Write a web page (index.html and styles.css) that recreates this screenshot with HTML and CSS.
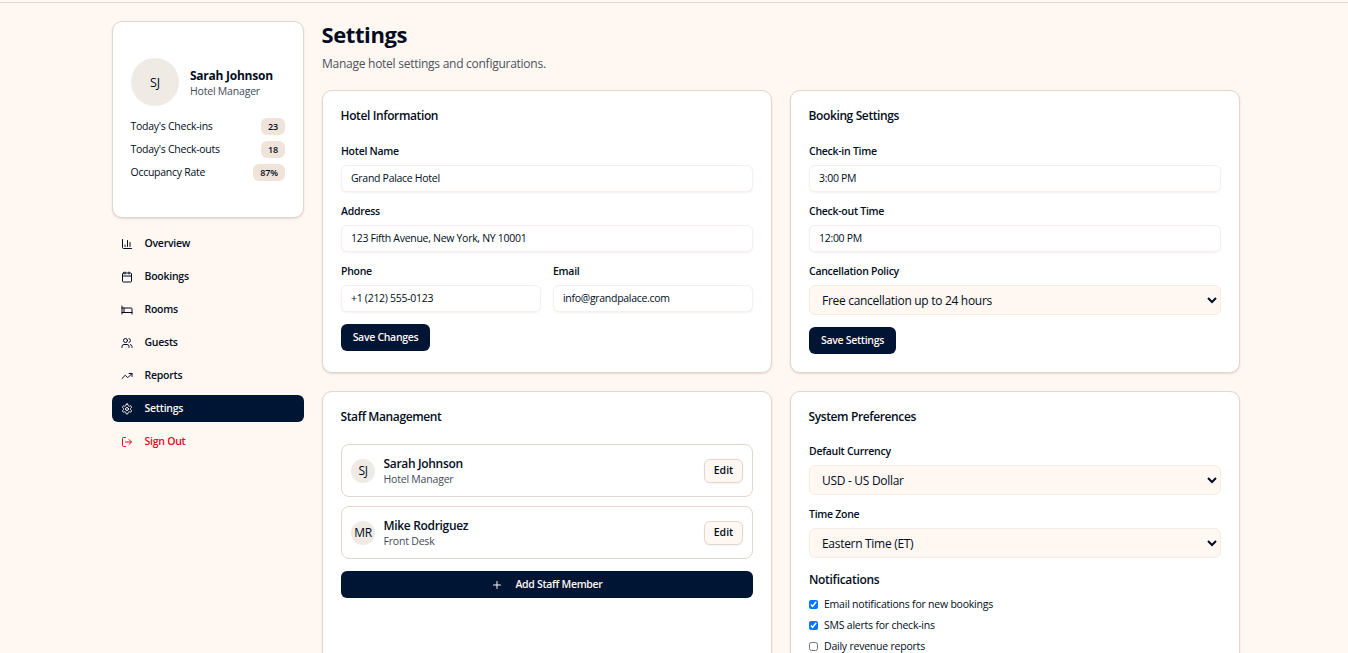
FILE: index.html
```html
<!DOCTYPE html>
<html lang="en">
<head>
<meta charset="utf-8">
<title>Settings</title>
<link rel="stylesheet" href="styles.css">
</head>
<body>
<header class="topbar"></header>
<div class="shell">
  <aside class="sidebar">
    <section class="card profile">
      <div class="profile-head">
        <div class="avatar avatar-lg">SJ</div>
        <div class="profile-text">
          <div class="profile-name">Sarah Johnson</div>
          <div class="role">Hotel Manager</div>
        </div>
      </div>
      <div class="stats">
        <div class="stat"><span>Today's Check-ins</span><b class="badge">23</b></div>
        <div class="stat"><span>Today's Check-outs</span><b class="badge">18</b></div>
        <div class="stat"><span>Occupancy Rate</span><b class="badge">87%</b></div>
      </div>
    </section>
    <nav class="nav">
      <a class="nav-item"><svg class="icon" viewBox="0 0 24 24"><path d="M3 3v16a2 2 0 0 0 2 2h16M18 17V9M13 17V5M8 17v-3"/></svg><span>Overview</span></a>
      <a class="nav-item"><svg class="icon" viewBox="0 0 24 24"><path d="M8 2v4M16 2v4M3 10h18"/><rect width="18" height="18" x="3" y="4" rx="2"/></svg><span>Bookings</span></a>
      <a class="nav-item"><svg class="icon" viewBox="0 0 24 24"><path d="M2 4v16M2 8h18a2 2 0 0 1 2 2v10M2 17h20M6 8v9"/></svg><span>Rooms</span></a>
      <a class="nav-item"><svg class="icon" viewBox="0 0 24 24"><path d="M16 21v-2a4 4 0 0 0-4-4H6a4 4 0 0 0-4 4v2M22 21v-2a4 4 0 0 0-3-3.87M16 3.13a4 4 0 0 1 0 7.75"/><circle cx="9" cy="7" r="4"/></svg><span>Guests</span></a>
      <a class="nav-item"><svg class="icon" viewBox="0 0 24 24"><path d="m22 7-8.500 8.500-5-5L2 17M16 7h6v6"/></svg><span>Reports</span></a>
      <a class="nav-item active"><svg class="icon" viewBox="0 0 24 24"><path d="M12.220 2h-.44a2 2 0 0 0-2 2v.18a2 2 0 0 1-1 1.730l-.43.25a2 2 0 0 1-2 0l-.15-.08a2 2 0 0 0-2.730.73l-.22.38a2 2 0 0 0 .73 2.730l.15.1a2 2 0 0 1 1 1.720v.51a2 2 0 0 1-1 1.740l-.15.09a2 2 0 0 0-.73 2.730l.22.38a2 2 0 0 0 2.730.73l.15-.08a2 2 0 0 1 2 0l.43.25a2 2 0 0 1 1 1.730V20a2 2 0 0 0 2 2h.44a2 2 0 0 0 2-2v-.18a2 2 0 0 1 1-1.730l.43-.25a2 2 0 0 1 2 0l.15.08a2 2 0 0 0 2.730-.73l.22-.39a2 2 0 0 0-.73-2.730l-.15-.08a2 2 0 0 1-1-1.740v-.5a2 2 0 0 1 1-1.740l.15-.09a2 2 0 0 0 .73-2.730l-.22-.38a2 2 0 0 0-2.730-.73l-.15.08a2 2 0 0 1-2 0l-.43-.25a2 2 0 0 1-1-1.730V4a2 2 0 0 0-2-2z"/><circle cx="12" cy="12" r="3"/></svg><span>Settings</span></a>
      <a class="nav-item danger"><svg class="icon" viewBox="0 0 24 24"><path d="M9 21H5a2 2 0 0 1-2-2V5a2 2 0 0 1 2-2h4M16 17l5-5-5-5M21 12H9"/></svg><span>Sign Out</span></a>
    </nav>
  </aside>
  <main class="main">
    <h1 class="page-title">Settings</h1>
    <p class="page-sub">Manage hotel settings and configurations.</p>
    <div class="cards">
      <section class="card panel">
        <h2 class="panel-title">Hotel Information</h2>
        <div class="fields fields-top">
          <div><label class="label">Hotel Name</label><input class="input" value="Grand Palace Hotel"></div>
          <div><label class="label">Address</label><input class="input" value="123 Fifth Avenue, New York, NY 10001"></div>
          <div class="pair">
            <div><label class="label">Phone</label><input class="input" value="+1 (212) 555-0123"></div>
            <div><label class="label">Email</label><input class="input" value="info@grandpalace.com"></div>
          </div>
          <button class="btn save-changes">Save Changes</button>
        </div>
      </section>
      <section class="card panel">
        <h2 class="panel-title">Booking Settings</h2>
        <div class="fields fields-top">
          <div><label class="label">Check-in Time</label><input class="input" value="3:00 PM"></div>
          <div><label class="label">Check-out Time</label><input class="input" value="12:00 PM"></div>
          <div><label class="label">Cancellation Policy</label><select class="select"><option>Free cancellation up to 24 hours</option></select></div>
          <button class="btn save-settings">Save Settings</button>
        </div>
      </section>
      <section class="card panel">
        <h2 class="panel-title">Staff Management</h2>
        <div class="staff-list">
          <div class="staff">
            <div class="avatar">SJ</div>
            <div class="staff-info"><div class="staff-name">Sarah Johnson</div><div class="role">Hotel Manager</div></div>
            <button class="btn-outline">Edit</button>
          </div>
          <div class="staff">
            <div class="avatar">MR</div>
            <div class="staff-info"><div class="staff-name">Mike Rodriguez</div><div class="role">Front Desk</div></div>
            <button class="btn-outline">Edit</button>
          </div>
        </div>
        <button class="btn btn-wide"><svg class="icon" viewBox="0 0 24 24"><path d="M5 12h14M12 5v14"/></svg><span>Add Staff Member</span></button>
      </section>
      <section class="card panel">
        <h2 class="panel-title">System Preferences</h2>
        <div class="fields">
          <div><label class="label">Default Currency</label><select class="select"><option>USD - US Dollar</option></select></div>
          <div><label class="label">Time Zone</label><select class="select"><option>Eastern Time (ET)</option></select></div>
          <div class="notify">
            <h3 class="notify-title">Notifications</h3>
            <label class="check"><input type="checkbox" checked><span>Email notifications for new bookings</span></label>
            <label class="check"><input type="checkbox" checked><span>SMS alerts for check-ins</span></label>
            <label class="check"><input type="checkbox"><span>Daily revenue reports</span></label>
          </div>
        </div>
      </section>
    </div>
  </main>
</div>
</body>
</html>
```
FILE: styles.css
```css
* { box-sizing: border-box; }
html { font-size: 12px; }
body {
  margin: 0;
  height: 653px;
  overflow: hidden;
  background: #fff7f2;
  color: #020d22;
  font-family: "Segoe UI", "Open Sans", "Noto Sans", sans-serif;
  font-size: 12px;
  line-height: 18px;
  white-space: nowrap;
}
h1, h2, h3, p { margin: 0; }
input, select, button { font-family: inherit; color: inherit; letter-spacing: inherit; }

.topbar { height: 3px; border-bottom: 1px solid #e2d6ce; }
.shell { display: flex; gap: 18px; width: 1128px; margin: 0 0 0 112px; padding-top: 18px; }
.sidebar { width: 192px; flex: none; }
.main { flex: 1; }
.card {
  background: #fff;
  border: 1px solid #e2d6ce;
  border-radius: 10px;
  box-shadow: 0 1px 2px rgba(60, 30, 10, 0.14);
}

.profile { height: 197px; padding: 36px 18px 0; }
.profile-head { display: flex; align-items: center; gap: 11px; }
.profile-text { padding-top: 2px; }
.avatar {
  flex: none;
  display: flex;
  align-items: center;
  justify-content: center;
  width: 24px;
  height: 24px;
  border-radius: 50%;
  background: #efeae4;
  font-size: 12px;
  letter-spacing: -0.3px;
}
.avatar-lg { width: 48px; height: 48px; padding-top: 1px; font-size: 12.5px; letter-spacing: 0; }
.profile-name { font-size: 12px; font-weight: 700; line-height: 16px; letter-spacing: -0.25px; }
.role { font-size: 10.5px; line-height: 15px; letter-spacing: -0.2px; color: #3f4a59; }
.stats { display: grid; gap: 6px; margin-top: 12px; font-size: 10.5px; letter-spacing: -0.27px; }
.stat { display: flex; align-items: center; justify-content: space-between; height: 17px; line-height: 15px; }
.stat > span { margin-left: -0.5px; }
.badge {
  padding: 1px 7px 0;
  border-radius: 6px;
  background: #f0e3da;
  font-size: 9px;
  font-weight: 600;
  line-height: 16px;
  letter-spacing: -0.1px;
}

.nav { display: grid; gap: 6px; margin-top: 12px; }
.nav-item {
  display: flex;
  align-items: center;
  gap: 11.5px;
  height: 27px;
  padding: 0 9px;
  border-radius: 6px;
  font-size: 10.5px;
  font-weight: 550;
  letter-spacing: -0.25px;
}
.nav-item span { padding-bottom: 1px; }
.nav-item .icon { margin-top: 1px; }
.active { background: #001433; color: #fff7f2; }
.danger { color: #e00b1c; }
.icon { width: 12px; height: 12px; flex: none; fill: none; stroke: currentColor; stroke-width: 2; stroke-linecap: round; stroke-linejoin: round; }

.page-title { font-size: 22px; line-height: 27px; letter-spacing: -0.4px; margin-left: -0.5px; }
.page-sub { padding-top: 7px; height: 24px; font-size: 12px; line-height: 18px; color: #4a5360; letter-spacing: -0.26px; }
.cards { display: grid; grid-template-columns: 450px 450px; gap: 18px; margin-top: 18px; grid-template-rows: 283px 330px; }
.panel { padding: 16px 18px 0; }
.panel-title { font-size: 12px; font-weight: 600; line-height: 18px; letter-spacing: -0.38px; margin-left: -0.5px; }
.fields { display: grid; gap: 12px; margin-top: 18px; }
.fields-top { margin-top: 19px; }
.label { display: block; margin-bottom: 6px; font-size: 10.5px; font-weight: 550; line-height: 15px; letter-spacing: -0.27px; }
.input {
  display: block;
  width: 100%;
  height: 27px;
  padding: 0 9px 1px;
  border: 1px solid #f6efeb;
  border-radius: 6px;
  background: #fff;
  box-shadow: 0 1px 2px rgba(0, 0, 0, 0.05);
  font-size: 10.5px;
  letter-spacing: -0.29px;
}
.pair { display: grid; grid-template-columns: 1fr 1fr; gap: 12px; }
.select {
  display: block;
  width: 100%;
  height: 30px;
  padding: 0 8px;
  border: 1px solid #f6ece6;
  border-radius: 6px;
  background-color: #fff7f2;
  font-size: 12px;
  letter-spacing: -0.3px;
}
.btn {
  display: flex;
  align-items: center;
  justify-content: center;
  height: 27px;
  padding: 0 0 1px;
  border: 0;
  border-radius: 6px;
  background: #001433;
  color: #fff7f2;
  font-size: 10.5px;
  font-weight: 600;
  letter-spacing: -0.3px;
}
.save-changes { width: 89px; }
.save-settings { width: 87px; }
.btn-wide { width: 100%; gap: 12px; margin-top: 12px; }
.btn-wide .icon { margin-top: 2px; }
.staff-list { display: grid; gap: 9px; margin-top: 18px; }
.staff { display: flex; align-items: center; height: 53px; padding: 0 9px; border: 1px solid #e2d6ce; border-radius: 8px; }
.staff-info { flex: 1; margin-left: 8.5px; padding-top: 2px; }
.staff-name { font-weight: 600; line-height: 16px; letter-spacing: -0.32px; }
.btn-outline {
  width: 39px;
  height: 24px;
  padding: 0 0 1px;
  border: 1px solid #e2d6ce;
  border-radius: 6px;
  background: #fff7f2;
  box-shadow: 0 1px 2px rgba(0, 0, 0, 0.05);
  font-size: 10.5px;
  font-weight: 550;
}
.notify-title { padding-top: 1px; margin-bottom: 7px; font-size: 12px; font-weight: 600; line-height: 18px; letter-spacing: -0.3px; }
.check { display: flex; align-items: center; gap: 6px; height: 15px; margin-bottom: 6px; font-size: 10.5px; letter-spacing: -0.22px; }
.check input { width: 9px; height: 9px; margin: 1px 0 0; }
```
